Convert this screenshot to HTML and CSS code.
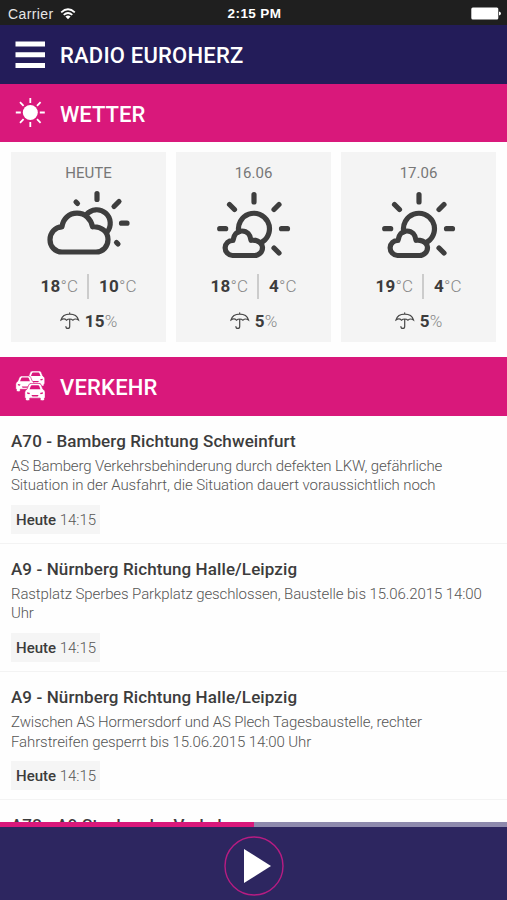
FILE: index.html
```html
<!DOCTYPE html>
<html lang="de">
<head>
<meta charset="utf-8">
<title>Radio Euroherz</title>
<link rel="stylesheet" href="styles.css">
</head>
<body>
<svg width="0" height="0" class="defs">
  <symbol id="sun-cloud" viewBox="380 188 78 74">
    <path d="M419 194.500v7.500M444 204.500l-5 5M394.500 204.500l5 5M384.700 228.700h6M446.500 228.700h6M439 248l5 5M403.800 232a15.500 15.500 0 1 1 24 9.500"/>
    <path d="M397.500 255.500a7.600 7.600 0 0 1 .5-15.200c.8-5.500 4-9.300 9-9.300s8.500 3.800 9 9.300c2-.5 11 0 11.500 7.200 0 4.500-3.500 8-8 8z"/>
  </symbol>
  <symbol id="umbrella" viewBox="0 0 20 18">
    <path d="M1 8C2 4.500 5.500 2.200 9.700 2.200S17.500 4.500 18.500 8c-2-1.300-4-1.300-5.500.2-1.800-1.500-4.800-1.500-6.600 0C5 6.700 3 6.700 1 8zM9.700 2.200V.8M9.700 7.300v7.200c0 2.600-3.800 2.600-3.800 0"/>
  </symbol>
  <symbol id="car" viewBox="0 0 20 17">
    <path class="car-body" d="M2.300 6 4 2Q4.600.4 6.200.4h7.600q1.600 0 2.200 1.600L17.700 6q2.100 1 2.100 3v5.500h-.8V16q-.2 1-2 1t-2-1v-1.500H5V16q-.2 1-2 1t-2-1v-1.500H.2V9q0-2 2.100-3z"/>
    <path class="car-cut" d="M4.800 6 6 2.900q.3-.7 1-.7h6q.7 0 1 .7L15.200 6zM2.500 8.800l2.800.7-.8 1.200-2-.5zM17.500 8.800l-2.800.7.800 1.200 2-.5zM6.500 11.500h7l-1 1.300h-5z"/>
  </symbol>
</svg>
<div class="screen">
  <div class="status">
    <span class="carrier">Carrier
      <svg class="wifi" viewBox="0 0 16 12"><path d="M1.200 4.300Q8-1.700 14.800 4.300M3.700 6.900q4.300-3.700 8.600 0"/><path class="dot" d="M5.400 8.500q2.600-2.200 5.200 0L8 11.300z"/></svg>
    </span>
    <span class="clock">2:15 PM</span>
    <svg class="battery" viewBox="0 0 30 13"><rect width="27" height="12" x=".3" y=".5" rx="1.500"/><path d="M28 4.500q2 .3 2 2t-2 2z"/></svg>
  </div>
  <header class="bar nav">
    <svg class="bar-icon" viewBox="0 0 30 30"><path fill="#fff" d="M.5 1.500h29.500v5H.5zM.5 12.200h29.500v5H.5zM.5 22.900h29.500v5H.5z"/></svg>
    <h1>RADIO EUROHERZ</h1>
  </header>
  <section>
    <div class="bar pink">
      <svg class="bar-icon" viewBox="0 0 30 30"><circle cx="15.300" cy="14.500" r="7.500" fill="#fff"/><path stroke="#fff" stroke-width="1.800" d="M15.300 0v5M15.300 24v5M.8 14.500h5M24.800 14.500h5M5 4.200l3.600 3.600M22 21.200l3.600 3.600M5 24.800l3.600-3.600M22 7.800l3.600-3.600"/></svg>
      <h2>WETTER</h2>
    </div>
    <div class="weather">
      <div class="card">
        <div class="day">HEUTE</div>
        <svg class="sky cloudy" viewBox="44 188 90 70">
          <path d="M97 193.500v6M119 201.500l-5 5M76 202l1.500 1.500M121.500 223.200h5.500M116.500 242.500l1.500 1.500M86.500 214.500a13.400 13.400 0 1 1 20.500 17.500"/>
          <path d="M62 252c-7 0-12-5.500-12-12.300s5-12.700 12-12.900c1-8 7-13.600 15-13.600s14 5.600 15.500 13.600c9-.6 15.500 5 15.500 12.700 0 7-5 12.500-12 12.500z"/>
        </svg>
        <div class="temps"><span><b>18</b>°C</span><span><b>10</b>°C</span></div>
        <div class="rain"><svg><use href="#umbrella"/></svg><b>15</b>%</div>
      </div>
      <div class="card">
        <div class="day">16.06</div>
        <svg class="sky"><use href="#sun-cloud"/></svg>
        <div class="temps"><span><b>18</b>°C</span><span><b>4</b>°C</span></div>
        <div class="rain"><svg><use href="#umbrella"/></svg><b>5</b>%</div>
      </div>
      <div class="card">
        <div class="day">17.06</div>
        <svg class="sky"><use href="#sun-cloud"/></svg>
        <div class="temps"><span><b>19</b>°C</span><span><b>4</b>°C</span></div>
        <div class="rain"><svg><use href="#umbrella"/></svg><b>5</b>%</div>
      </div>
    </div>
  </section>
  <section>
    <div class="bar pink traffic">
      <svg class="bar-icon" viewBox="0 0 30 30"><use href="#car" x="11.500" y="-.5" width="18.500" height="15.700"/><use href="#car" x=".5" y="4.500" width="19" height="16.200"/><use href="#car" x="9.500" y="12" width="21" height="17.800"/></svg>
      <h2>VERKEHR</h2>
    </div>
    <article>
      <h3>A70 - Bamberg Richtung Schweinfurt</h3>
      <p>AS Bamberg Verkehrsbehinderung durch defekten LKW, gefährliche<br><span class="wide">Situation in der Ausfahrt, die Situation dauert voraussichtlich noch</span></p>
      <div class="time"><b>Heute</b> 14:15</div>
    </article>
    <article>
      <h3>A9 - Nürnberg Richtung Halle/Leipzig</h3>
      <p><span class="wide">Rastplatz Sperbes Parkplatz geschlossen, Baustelle bis 15.06.2015 14:00</span><br>Uhr</p>
      <div class="time"><b>Heute</b> 14:15</div>
    </article>
    <article>
      <h3>A9 - Nürnberg Richtung Halle/Leipzig</h3>
      <p>Zwischen AS Hormersdorf und AS Plech Tagesbaustelle, rechter<br><span class="wide">Fahrstreifen gesperrt bis 15.06.2015 14:00 Uhr</span></p>
      <div class="time"><b>Heute</b> 14:15</div>
    </article>
    <article>
      <h3>A72 - A9 Stockender Verkehr</h3>
    </article>
  </section>
  <footer class="player">
    <div class="progress"><div class="done"></div></div>
    <svg class="play" viewBox="0 0 60 60"><circle cx="30" cy="30" r="29"/><path d="M20 13v34l27-17z"/></svg>
  </footer>
</div>
</body>
</html>
```

FILE: styles.css
```css
* { box-sizing: border-box; }
body { margin: 0; font-family: Roboto, "Liberation Sans", sans-serif; color: #3c3c3c; background: #fefefe; }
.defs { position: absolute; }
.screen { position: relative; width: 507px; height: 900px; overflow: hidden; }
h1, h2, h3, p { margin: 0; }
svg { display: block; flex: none; }

.status { display: grid; grid-template-columns: 1fr auto 1fr; align-items: center; height: 25px; padding: 2px 6px 0 8px; background: #1f1f1f; color: #e6e6e6; font: 14px/20px "Liberation Sans", sans-serif; letter-spacing: .4px; }
.carrier { display: flex; align-items: center; gap: 6px; }
.wifi { width: 16px; height: 12px; fill: none; stroke: #fff; stroke-width: 1.800; }
.wifi .dot { fill: #fff; stroke: none; }
.clock { font-weight: 700; font-size: 13.500px; color: #fff; }
.battery { width: 30px; height: 13px; justify-self: end; fill: #fff; }

.bar { display: flex; align-items: center; gap: 15px; height: 58px; padding-left: 15px; color: #fff; }
.nav { height: 59px; background: #231c59; }
.pink { background: #d9187b; }
.traffic { height: 58.500px; }
.bar-icon { width: 30px; height: 30px; }
.bar h1, .bar h2 { font-size: 22px; line-height: 30px; font-weight: 500; padding-top: 3px; }
.bar h1 { letter-spacing: .2px; }
.traffic h2 { letter-spacing: .2px; }
.car-body { fill: #fff; stroke: #d9187b; stroke-width: .7; }
.car-cut { fill: #d9187b; }

.weather { display: flex; gap: 10px; height: 215px; padding: 10px 11px 15px; }
.card { flex: 1; display: flex; flex-direction: column; align-items: center; background: #f4f4f4; }
.day { margin-top: 11px; font-size: 15px; line-height: 20px; color: #777; }
.sky { width: 78px; height: 74px; margin: 5px 0 8px; fill: none; stroke: #3e3e3e; stroke-width: 5.200; stroke-linecap: round; stroke-linejoin: round; }
.cloudy { width: 90px; height: 70px; margin-bottom: 12px; }
.temps { display: flex; height: 32px; padding-top: 4px; font-size: 17px; line-height: 24px; font-weight: 300; color: #888; }
.temps span + span { margin-left: 9px; padding-left: 10px; border-left: 2px solid #ccc; height: 25px; }
.temps span { height: 25px; }
.card b { font-weight: 700; color: #3c3c3c; letter-spacing: .3px; }
.rain { display: flex; align-items: center; height: 25px; margin-top: 6px; font-size: 17px; font-weight: 300; color: #888; }
.rain svg { width: 20px; height: 18px; margin-right: 5px; fill: none; stroke: #484848; stroke-width: 1.200; stroke-linecap: round; }

article { height: 128.300px; padding: 13px 11px 0; border-bottom: 1px solid #f3f3f3; }
article h3 { font-size: 17px; line-height: 24px; font-weight: 500; letter-spacing: .1px; white-space: nowrap; }
article p { margin-top: 4px; font-size: 15px; line-height: 19.500px; font-weight: 300; letter-spacing: -.135px; color: #555; white-space: nowrap; }
.wide { letter-spacing: -.1px; }
.time { width: 89px; height: 29px; margin-top: 9px; padding-left: 5px; background: #f5f5f5; font-size: 15px; line-height: 31px; font-weight: 300; color: #555; white-space: nowrap; }
.time b { font-weight: 500; color: #3c3c3c; }

.player { position: absolute; left: 0; right: 0; bottom: 0; height: 78.500px; background: #2d2660; }
.progress { height: 5px; background: #8e8aad; }
.done { width: 50%; height: 5px; background: #d9187b; }
.play { width: 60px; height: 60px; margin: 9px auto 0; fill: none; stroke: #b71c82; stroke-width: 1.400; }
.play path { fill: #fff; stroke: none; }
```
